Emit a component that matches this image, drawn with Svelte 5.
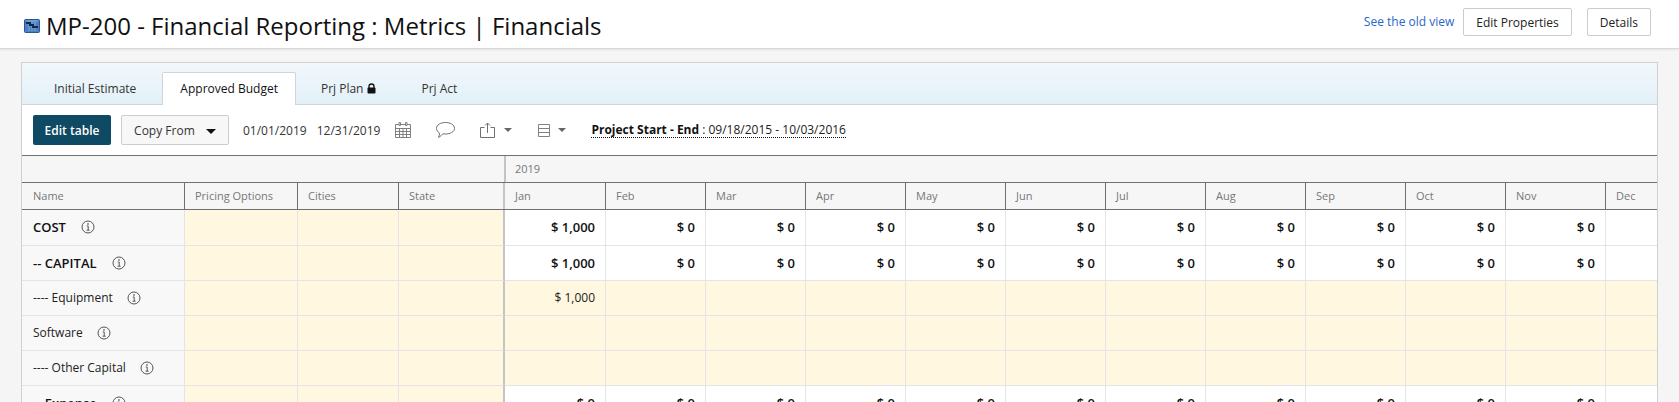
<script>
  const months = ['Jan', 'Feb', 'Mar', 'Apr', 'May', 'Jun', 'Jul', 'Aug', 'Sep', 'Oct', 'Nov', 'Dec'];
  const tabs = ['Initial Estimate', 'Approved Budget', 'Prj Plan', 'Prj Act'];
  const rows = [
    { name: 'COST', bold: true, first: '$ 1,000', rest: '$ 0' },
    { name: '-- CAPITAL', bold: true, first: '$ 1,000', rest: '$ 0' },
    { name: '---- Equipment', edit: true, first: '$ 1,000', rest: '' },
    { name: 'Software', edit: true, first: '', rest: '' },
    { name: '---- Other Capital', edit: true, first: '', rest: '' },
    { name: '-- Expense', bold: true, first: '$ 0', rest: '$ 0' }
  ];
</script>

<div class="page">
  <header class="topbar">
    <div class="title">
      <svg class="logo" width="16" height="15" viewBox="0 0 16 15">
        <rect x="0.5" y="1.5" width="15" height="13" rx="1" fill="#4a80c4" stroke="#2a5596" />
        <path d="M2 3h12M5 2v11M8 2v11M11 2v11" stroke="#a9c6e8" stroke-width="1" opacity="0.6" />
        <path d="M2 4h5v2h3v2h4v2H8V8H5V6H2z" fill="#14284a" />
      </svg>
      <h1>MP-200 - Financial Reporting : Metrics | Financials</h1>
    </div>
    <div class="top-actions">
      <a href="#old" class="old-link">See the old view</a>
      <button class="btn-light">Edit Properties</button>
      <button class="btn-light details">Details</button>
    </div>
  </header>

  <section class="panel">
    <nav class="tabs">
      {#each tabs as tab, i}
        <div class="tab" class:active={i === 1}>
          {tab}
          {#if tab === 'Prj Plan'}
            <svg width="9" height="11" viewBox="0 0 9 11">
              <path d="M2 5V3.500a2.500 2.500 0 0 1 5 0V5" fill="none" stroke="#111" stroke-width="1.300" />
              <rect x="0.500" y="4.500" width="8" height="6" rx="1" fill="#111" />
            </svg>
          {/if}
        </div>
      {/each}
    </nav>

    <div class="toolbar">
      <button class="edit-btn">Edit table</button>
      <button class="copy-btn">Copy From <span class="caret dark"></span></button>
      <span class="dates"><span>01/01/2019</span><span>12/31/2019</span></span>
      <svg class="cal" width="16" height="16" viewBox="0 0 16 16" fill="none" stroke="#808080">
        <path d="M.5 2.500h15v13H.5zM.5 6.500h15M.5 9.500h15M.5 12.500h15M4.500 6.500v9M8 6.500v9M11.500 6.500v9" />
        <path d="M4 .5h1.500v3H4zM10.500 .5H12v3h-1.500z" fill="#fff" />
      </svg>
      <svg class="comment" width="19" height="16" viewBox="0 0 19 16" fill="none" stroke="#707070">
        <path d="M9.500 .5c4.800 0 9 2.300 9 5.800s-4.200 5.700-9 5.700c-.9 0-1.800-.1-2.600-.2-1 1.300-2.500 2.600-4.400 3.700.6-1.300 1-2.800 1-4.500C1.800 10 .5 8.300 .5 6.300.5 2.800 4.700 .5 9.500 .5z" />
      </svg>
      <span class="tool share">
        <svg width="15" height="16" viewBox="0 0 15 16" fill="none" stroke="#707070">
          <path d="M4.500 5.500h-4v10h14v-10h-4M7.500 11V1M5 3.500l2.500-2.500L10 3.500" />
        </svg>
        <span class="caret"></span>
      </span>
      <span class="tool cols">
        <svg width="12" height="13" viewBox="0 0 12 13" fill="none" stroke="#808080">
          <path d="M.5 .5h11v12H.5zM.5 4.500h11M.5 8.500h11" />
        </svg>
        <span class="caret"></span>
      </span>
      <span class="project"><b>Project Start - End</b> : 09/18/2015 - 10/03/2016</span>
    </div>

    <div class="grid">
      <div class="year-row">
        <div class="frozen-gap"></div>
        <div class="year">2019</div>
      </div>

      <div class="row head">
        <div class="c name">Name</div>
        <div class="c opt">Pricing Options</div>
        <div class="c city">Cities</div>
        <div class="c state">State</div>
        {#each months as m, i}
          <div class="c month" class:jan={i === 0}>{m}</div>
        {/each}
      </div>

      {#each rows as r}
        <div class="row body">
          <div class="c name" class:bold={r.bold}>
            <span>{r.name}</span>
            <svg class="info" width="14" height="14" viewBox="0 0 14 14" fill="none" stroke="#555">
              <circle cx="7" cy="7" r="6" />
              <path d="M5.800 6h1.400v4M5.600 10.200h3" />
              <path d="M7 3.300v1.400" stroke-width="1.400" />
            </svg>
          </div>
          <div class="c opt fill"></div>
          <div class="c city fill"></div>
          <div class="c state fill"></div>
          {#each months as m, i}
            <div class="c month num" class:jan={i === 0} class:fill={r.edit} class:bold={r.bold}>
              {i === 0 ? r.first : i === 11 ? '' : r.rest}
            </div>
          {/each}
        </div>
      {/each}
    </div>
  </section>
</div>

<style>
  :global(body) {
    margin: 0;
    background: #f5f5f5;
    font-family: "Open Sans", sans-serif;
    overflow: hidden;
  }

  .page {
    height: 402px;
    overflow: hidden;
  }

  .topbar {
    height: 49px;
    box-sizing: border-box;
    background: #fff;
    border-bottom: 1px solid #d9d9d9;
    box-shadow: 0 1px 2px rgba(0, 0, 0, 0.08);
    display: flex;
    justify-content: space-between;
    align-items: center;
    padding: 0 28px 0 24px;
  }

  .title {
    display: flex;
    align-items: center;
    gap: 6px;
    padding-top: 2px;
  }

  h1 {
    margin: 0;
    font-size: 24px;
    font-weight: 400;
    color: #111;
    line-height: 47px;
  }

  .top-actions {
    display: flex;
    align-items: center;
    font-size: 12px;
    padding-bottom: 4px;
  }

  .old-link {
    color: #2a66c8;
    text-decoration: none;
    margin-right: 9px;
    padding-bottom: 2px;
  }

  .btn-light {
    height: 28px;
    padding: 0 12px;
    background: #fff;
    border: 1px solid #ccc;
    border-radius: 2px;
    font: 12px "Open Sans", sans-serif;
    color: #222;
  }

  .details {
    margin-left: 15px;
  }

  .panel {
    margin: 13px 21px 0 21px;
    border: 1px solid #d0d0d0;
    border-bottom: none;
    background: #fff;
  }

  .tabs {
    height: 42px;
    box-sizing: border-box;
    display: flex;
    align-items: flex-end;
    padding-left: 10px;
    background: linear-gradient(#f2f8fc, #e2f0f8);
    border-bottom: 1px solid #d0d5d8;
  }

  .tab {
    height: 33px;
    box-sizing: border-box;
    padding: 7px 21px 0 21px;
    font-size: 12px;
    color: #333;
    display: flex;
    align-items: flex-start;
    gap: 4px;
    margin-bottom: -1px;
    border: 1px solid transparent;
    border-bottom: none;
  }

  .tab:first-child {
    padding-right: 25px;
  }

  .tab:nth-child(3) {
    padding-right: 22px;
  }

  .tab svg {
    margin-top: 3px;
  }

  .tab.active {
    background: #fff;
    border-color: #d0d5d8;
    color: #111;
    border-radius: 2px 2px 0 0;
    padding: 7px 17px 0 17px;
    margin-right: 3px;
  }

  .toolbar {
    height: 50px;
    display: flex;
    align-items: center;
    padding-left: 11px;
    font-size: 12px;
    color: #333;
  }

  .edit-btn {
    width: 78px;
    height: 30px;
    background: #0e4a63;
    color: #fff;
    border: none;
    border-radius: 2px;
    font: 600 12px "Open Sans", sans-serif;
  }

  .copy-btn {
    width: 108px;
    height: 30px;
    margin-left: 10px;
    background: #f7f7f7;
    border: 1px solid #ccc;
    border-radius: 2px;
    font: 12px "Open Sans", sans-serif;
    color: #333;
  }

  .caret {
    display: inline-block;
    width: 0;
    height: 0;
    border-left: 4px solid transparent;
    border-right: 4px solid transparent;
    border-top: 4px solid #666;
  }

  .caret.dark {
    border-left-width: 5px;
    border-right-width: 5px;
    border-top: 5px solid #111;
    margin-left: 8px;
    vertical-align: 1px;
  }

  .dates {
    display: flex;
    gap: 10px;
    margin-left: 14px;
  }

  .cal {
    margin-left: 15px;
  }

  .comment {
    margin-left: 25px;
  }

  .tool {
    display: flex;
    align-items: center;
    gap: 9px;
  }

  .share {
    margin-left: 25px;
  }

  .cols {
    margin-left: 26px;
    gap: 8px;
  }

  .project {
    margin-left: 25px;
    border-bottom: 1px dotted #111;
    color: #222;
    line-height: 15px;
  }

  .project b {
    color: #111;
    font-weight: 700;
  }

  .grid {
    border-top: 1px solid #707070;
    overflow: hidden;
  }

  .year-row {
    height: 26px;
    display: flex;
    background: #f6f6f6;
    border-bottom: 1px solid #707070;
    font-size: 11px;
    color: #777;
  }

  .frozen-gap {
    width: 482px;
    border-right: 2px solid #c4c4c4;
    flex: none;
  }

  .year {
    padding: 5px 9px;
    line-height: 16px;
  }

  .row {
    display: flex;
    box-sizing: border-box;
    width: 1700px;
  }

  .head {
    height: 27px;
    background: #f6f6f6;
    border-bottom: 1px solid #707070;
    font-size: 11px;
    color: #777;
  }

  .head .c {
    border-right: 1px solid #707070;
    padding: 5px 10px;
    line-height: 16px;
  }

  .head .name {
    padding-left: 11px;
  }

  .body {
    height: 35px;
    font-size: 12px;
    color: #222;
  }

  .head + .body {
    height: 36px;
  }

  .head + .body .name {
    padding-bottom: 2px;
  }

  .body .c {
    border-right: 1px solid #e4e4e4;
    border-bottom: 1px solid #e4e4e4;
    line-height: 34px;
  }

  .c {
    box-sizing: border-box;
    flex: none;
  }

  .name { width: 163px; }
  .opt { width: 113px; }
  .city { width: 101px; }
  .state { width: 106px; }
  .month { width: 100px; }
  .month.jan { width: 101px; }

  .head .state,
  .body .state {
    border-right: 2px solid #c4c4c4;
  }

  .body .name {
    background: #f8f8f8;
    padding-left: 11px;
    display: flex;
    align-items: center;
    gap: 14px;
  }

  .body .name.bold {
    gap: 15px;
  }

  .bold {
    font-size: 13px;
    font-weight: 600;
    color: #111;
  }

  .fill {
    background: #fff7df;
  }

  .num {
    text-align: right;
    padding-right: 10px;
  }

  .info {
    flex: none;
  }
</style>
